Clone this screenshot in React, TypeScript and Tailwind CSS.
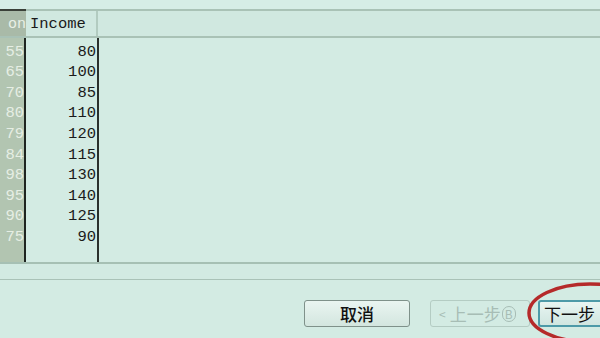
import React from "react";

const rows: [string, string][] = [
  ["55", "80"],
  ["65", "100"],
  ["70", "85"],
  ["80", "110"],
  ["79", "120"],
  ["84", "115"],
  ["98", "130"],
  ["95", "140"],
  ["90", "125"],
  ["75", "90"],
];

export default function App() {
  return (
    <div className="relative w-[600px] h-[338px] overflow-hidden bg-[#d3ebe3] flex flex-col" style={{ fontFamily: '"Liberation Mono", "Courier New", monospace' }}>
      <div className="h-[9px] bg-[#d6ede6]" />
      <div className="h-[2px] bg-[#a9c2b6] flex">
        <div className="w-[26px] bg-[#3a4038]" />
      </div>
      <div className="h-[27px] flex bg-[#d0e8e0] border-b-2 border-[#a9c2b6]">
        <div className="w-[26px] bg-[#a9baa8] flex items-center justify-end pt-[3px] text-[15px] text-[#e8f0e6] overflow-hidden">on</div>
        <div className="w-[72px] border-r-2 border-[#b2cbc0] flex items-center pl-[4px] pt-[3px] text-[15.5px] text-[#1a1a1a]">Income</div>
        <div className="flex-1" />
      </div>
      <div className="h-[224px] flex">
        <div className="w-[24px] bg-[#b2c5b1] pt-[4px] overflow-hidden">
          {rows.map(([a]) => (
            <div key={a} className="h-[20.6px] flex items-center justify-end text-[15.5px] text-[#e6eee4]">{a}</div>
          ))}
        </div>
        <div className="w-[2px] bg-[#1e2420]" />
        <div className="w-[71px] pt-[4px]">
          {rows.map(([a, b]) => (
            <div key={a} className="h-[20.6px] flex items-center justify-end pr-[1px] text-[15.5px] text-[#1a1a1a]">{b}</div>
          ))}
        </div>
        <div className="w-[2px] bg-[#2a302c]" />
        <div className="flex-1" />
      </div>
      <div className="h-[2px] bg-[#a6c0b4]" />
      <div className="h-[15px] bg-[#d2eae2]" />
      <div className="h-[1px] bg-[#a9c2b7]" />
      <div className="flex-1 flex items-start pt-[20px] pl-[304px] gap-[20px]" style={{ fontFamily: '"Noto Sans CJK SC", sans-serif' }}>
        <div className="w-[106px] h-[27px] rounded-[3px] border border-[#7f918a] bg-gradient-to-b from-[#eaf5f1] to-[#d3e6df] flex items-center justify-center text-[17px] text-[#111] font-medium shrink-0">取消</div>
        <div className="w-[100px] h-[27px] rounded-[3px] border border-[#b4ccc3] flex items-center pl-[8px] text-[17px] text-[#a7bdb5] shrink-0">
          <span className="text-[12px] mr-[4px]">&lt;</span>上一步<span className="ml-[1px] text-[12px] border border-[#a7bdb5] rounded-full px-[2px] leading-[14px]">B</span>
        </div>
        <div className="w-[90px] h-[27px] -ml-[12px] rounded-[3px] border-2 border-[#4d9aa8] bg-gradient-to-b from-[#e8f5f2] to-[#d0e6e0] flex items-center pl-[4px] text-[17px] text-[#111] shrink-0">下一步</div>
      </div>
      <svg className="absolute left-0 top-0" width="600" height="338">
        <ellipse cx="590" cy="313" rx="61" ry="29" fill="none" stroke="#b52a2a" strokeWidth="3.5" />
      </svg>
    </div>
  );
}
